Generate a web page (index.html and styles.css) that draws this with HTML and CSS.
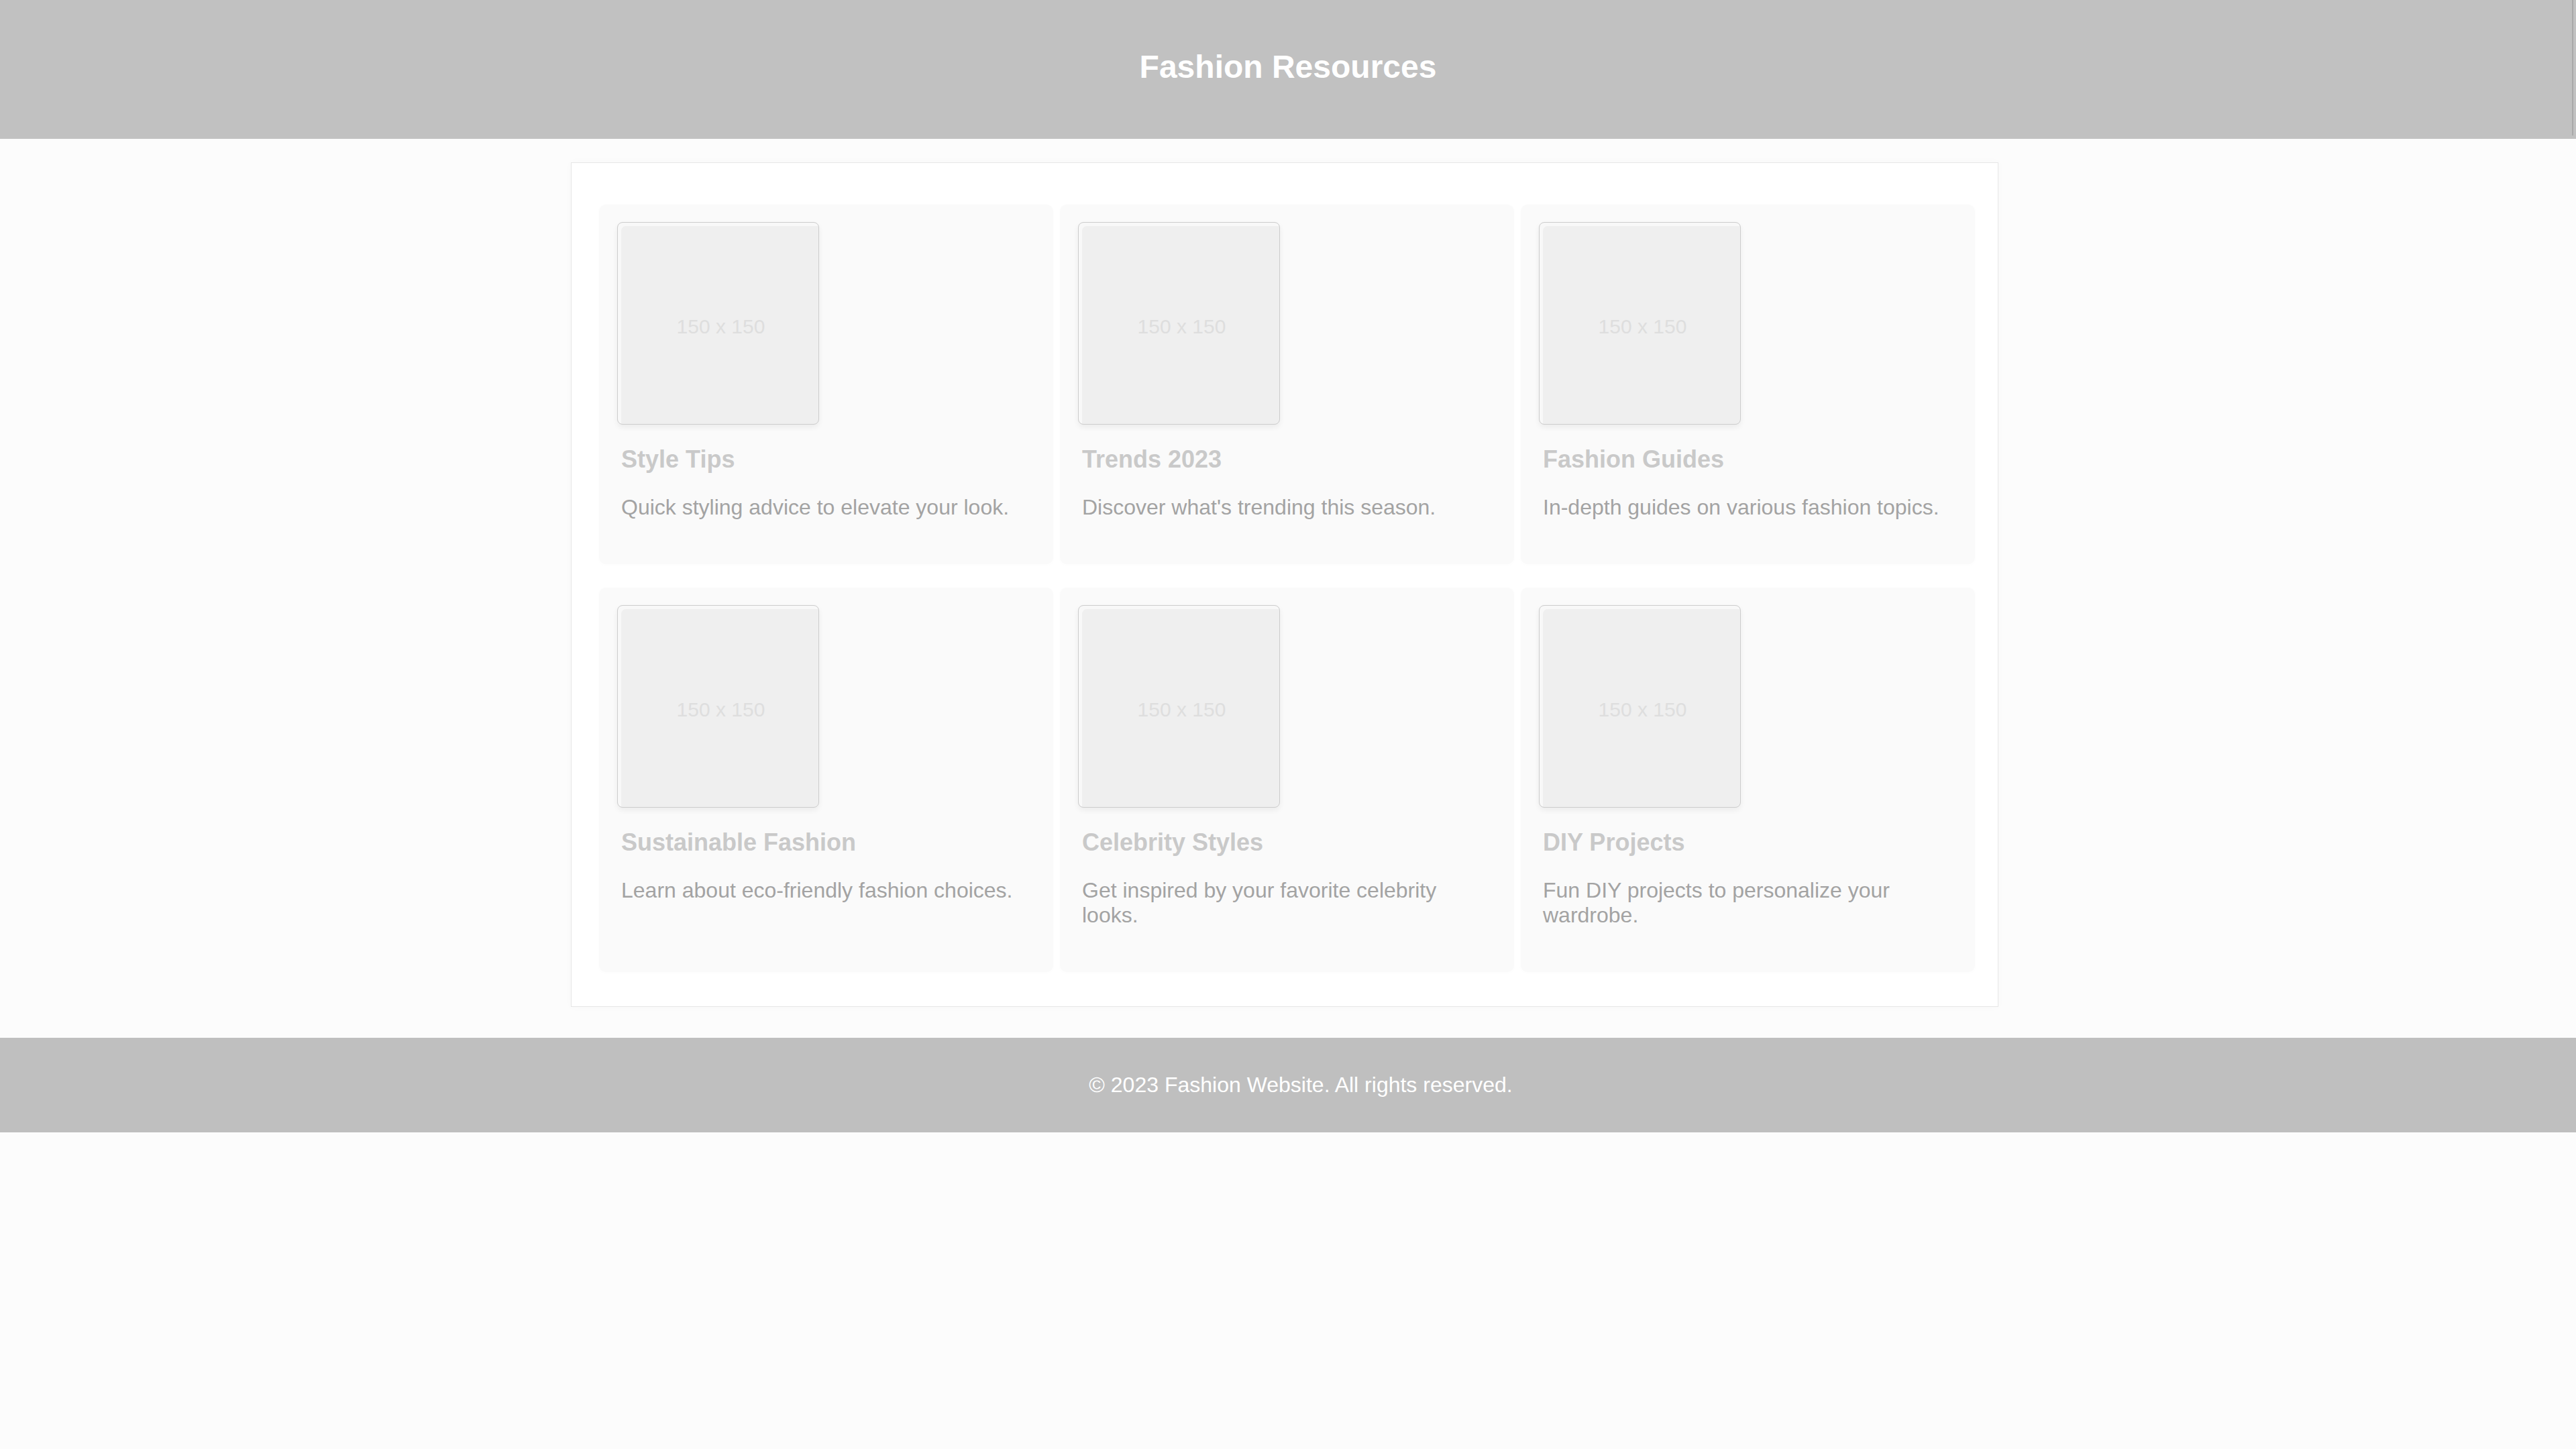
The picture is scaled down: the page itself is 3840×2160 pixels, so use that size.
FILE: index.html
```html
<!DOCTYPE html>
<html lang="en">
<head>
<meta charset="utf-8">
<title>Fashion Resources</title>
<link rel="stylesheet" href="styles.css">
</head>
<body>
<header class="site-header">
  <h1 class="site-title">Fashion Resources</h1>
</header>
<main class="resources">
  <div class="grid">
    <article class="card">
      <div class="thumb"><span>150 x 150</span></div>
      <h3 class="card-title">Style Tips</h3>
      <p class="card-text">Quick styling advice to elevate your look.</p>
    </article>
    <article class="card">
      <div class="thumb"><span>150 x 150</span></div>
      <h3 class="card-title">Trends 2023</h3>
      <p class="card-text">Discover what's trending this season.</p>
    </article>
    <article class="card">
      <div class="thumb"><span>150 x 150</span></div>
      <h3 class="card-title">Fashion Guides</h3>
      <p class="card-text">In-depth guides on various fashion topics.</p>
    </article>
    <article class="card">
      <div class="thumb"><span>150 x 150</span></div>
      <h3 class="card-title">Sustainable Fashion</h3>
      <p class="card-text">Learn about eco-friendly fashion choices.</p>
    </article>
    <article class="card">
      <div class="thumb"><span>150 x 150</span></div>
      <h3 class="card-title">Celebrity Styles</h3>
      <p class="card-text">Get inspired by your favorite celebrity looks.</p>
    </article>
    <article class="card">
      <div class="thumb"><span>150 x 150</span></div>
      <h3 class="card-title">DIY Projects</h3>
      <p class="card-text">Fun DIY projects to personalize your wardrobe.</p>
    </article>
  </div>
</main>
<footer class="site-footer">
  <p class="footer-text">© 2023 Fashion Website. All rights reserved.</p>
</footer>
</body>
</html>
```

FILE: styles.css
```css
* {
  box-sizing: border-box;
}

html, body {
  margin: 0;
  padding: 0;
}

body {
  background: #fcfcfc;
  font-family: "Liberation Sans", Arial, Helvetica, sans-serif;
  font-size: 32px;
  color: #a3a3a3;
}

.site-header {
  position: relative;
  background: #c1c1c1;
  padding: 72px 0 80px;
  text-align: center;
}

.site-header::after {
  content: "";
  position: absolute;
  top: 0;
  bottom: 5px;
  right: 4px;
  width: 2px;
  background: #a9a9a9;
}

.site-title {
  margin: 0;
  font-size: 48px;
  line-height: 55px;
  font-weight: 700;
  color: #ffffff;
}

.resources {
  width: 2128px;
  margin: 35px auto 46px calc(50% - 1069px);
  padding: 62px 34px 51px 41px;
  background: #ffffff;
  border: 1px solid #e6e6e6;
  box-shadow: 0 0 12px rgba(0, 0, 0, 0.025);
}

.grid {
  display: grid;
  grid-template-columns: repeat(3, 1fr);
  column-gap: 10px;
  row-gap: 35px;
}

.card {
  background: #fafafa;
  border-radius: 10px;
  padding: 26px 34px 34px 27px;
  box-shadow: 0 1px 6px rgba(0, 0, 0, 0.015);
}

.thumb {
  width: 301px;
  height: 302px;
  border: 1px solid #cdcdcd;
  border-radius: 8px;
  background: #efefef;
  box-shadow: inset 5px 5px 0 #f8f8f8, 0 4px 8px rgba(0, 0, 0, 0.06);
  display: flex;
  align-items: center;
  justify-content: center;
}

.thumb span {
  font-size: 30px;
  color: #dedede;
  padding: 10px 0 0 8px;
}

.card-title {
  margin: 31px 0 0;
  padding-left: 6px;
  font-size: 36px;
  font-weight: 700;
  line-height: normal;
  color: #c9c9c9;
}

.card-text {
  margin: 32px 0;
  padding-left: 6px;
  font-size: 32px;
  line-height: normal;
  color: #a3a3a3;
}

.site-footer {
  background: #bfbfbf;
  padding: 52px 0 52px 38px;
  text-align: center;
}

.footer-text {
  margin: 0;
  font-size: 32px;
  line-height: normal;
  color: #ffffff;
}
```
